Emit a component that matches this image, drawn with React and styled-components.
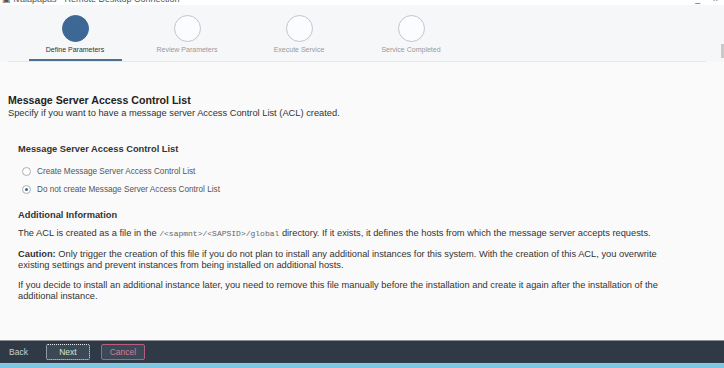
import React from 'react'
import styled, { createGlobalStyle } from 'styled-components'

const Global = createGlobalStyle`
    html, body {
        margin: 0;
        padding: 0;
        background: #fafafa;
        font-family: "Liberation Sans", Arial, sans-serif;
    }
`

const Page = styled.div`
    width: 724px;
    height: 368px;
    display: flex;
    flex-direction: column;
    overflow: hidden;
    background: #fafafa;
`

const TitleBar = styled.div`
    height: 5px;
    overflow: hidden;
    background: #ffffff;
    display: flex;
    justify-content: space-between;
    font-size: 9px;
    color: #555;
    line-height: 1;
    padding: 0 6px 0 2px;
`

const TitleText = styled.span`
    margin-top: -5px;
    white-space: nowrap;
`

const Header = styled.div`
    height: 57px;
    background: #f6f7f8;
    padding: 0 18px 0 8px;
`

const Steps = styled.div`
    height: 56px;
    display: flex;
    padding-left: 11px;
    border-bottom: 1px solid #e6e8ea;
`

const Step = styled.div`
    width: 112px;
    display: flex;
    flex-direction: column;
    align-items: center;
`

const Circle = styled.div`
    width: 27px;
    height: 27px;
    margin-top: 10px;
    border-radius: 50%;
    box-sizing: border-box;
    background: ${p => (p.active ? '#3d6794' : '#fbfcfd')};
    border: 1px solid ${p => (p.active ? '#3d6794' : '#bcc6d2')};
`

const StepLabel = styled.div`
    margin-top: 4px;
    font-size: 7px;
    color: ${p => (p.active ? '#333' : '#9a9a9a')};
    flex: 1;
`

const Underline = styled.div`
    width: 93px;
    height: 2px;
    background: ${p => (p.active ? '#4d6f92' : 'transparent')};
`

const Content = styled.div`
    flex: 1;
    display: flex;
    background: #fafafa;
`

const Main = styled.div`
    flex: 1;
    padding: 32px 8px 0 8px;
    color: #333;
`

const ScrollTrack = styled.div`
    width: 3px;
    display: flex;
    flex-direction: column;
`

const ScrollThumb = styled.div`
    height: 14px;
    background: #c9c9c9;
    margin-top: -18px;
`

const Title = styled.div`
    font-size: 10.6px;
    font-weight: bold;
    color: #222;
    line-height: 13px;
`

const Subtitle = styled.div`
    font-size: 9.3px;
    line-height: 13px;
    color: #333;
`

const Section = styled.div`
    padding-left: 10px;
    margin-top: ${p => p.top || 0}px;
`

const SectionTitle = styled.div`
    font-size: 9.3px;
    font-weight: bold;
    color: #333;
    line-height: 12px;
`

const RadioList = styled.div`
    margin-top: 7px;
`

const RadioRow = styled.label`
    display: flex;
    align-items: center;
    gap: 6px;
    margin-left: 4px;
    height: 18px;
    font-size: 8.2px;
    color: #555;
`

const RadioDot = styled.span`
    width: 9px;
    height: 9px;
    border-radius: 50%;
    box-sizing: border-box;
    border: 1px solid #a9b0b8;
    background: #fff;
    display: flex;
    align-items: center;
    justify-content: center;

    &::after {
        content: '';
        width: 3px;
        height: 3px;
        border-radius: 50%;
        background: ${p => (p.checked ? '#3d6794' : 'transparent')};
    }
`

const Para = styled.p`
    margin: ${p => p.top || 10}px 0 0 0;
    font-size: 9.3px;
    line-height: 11px;
    color: #333;
    max-width: 645px;
`

const Code = styled.code`
    font-family: "Liberation Mono", "Courier New", monospace;
    font-size: 8px;
    color: #666;
`

const Footer = styled.div`
    height: 22px;
    border-top: 1px solid #8b8f94;
    background: #2f3a46;
    display: flex;
    align-items: center;
    gap: 11px;
    padding-left: 9px;
`

const BackLink = styled.span`
    font-size: 8.5px;
    color: #c9ced3;
    margin-right: 7px;
`

const Button = styled.button`
    width: 44px;
    height: 16px;
    box-sizing: border-box;
    padding: 0;
    font-family: "Liberation Sans", Arial, sans-serif;
    font-size: 8.5px;
    background: #3b4957;
    border-radius: 2px;
    color: ${p => (p.variant === 'cancel' ? '#d77b98' : '#d8e6cf')};
    border: 1px ${p => (p.variant === 'cancel' ? 'solid #b85d7e' : 'dotted #e8ecef')};
`

const Taskbar = styled.div`
    height: 4px;
    border-top: 1px solid #b8bcc0;
    background: #7cc6e2;
`

const steps = ['Define Parameters', 'Review Parameters', 'Execute Service', 'Service Completed']

const App = () => {
    return (
        <Page>
            <Global />
            <TitleBar>
                <TitleText>▣ ivalapapas - Remote Desktop Connection</TitleText>
                <TitleText>_ &nbsp;&nbsp;&nbsp; ×</TitleText>
            </TitleBar>
            <Header>
                <Steps>
                    {steps.map((s, i) => (
                        <Step key={s}>
                            <Circle active={i === 0} />
                            <StepLabel active={i === 0}>{s}</StepLabel>
                            <Underline active={i === 0} />
                        </Step>
                    ))}
                </Steps>
            </Header>
            <Content>
                <Main>
                    <Title>Message Server Access Control List</Title>
                    <Subtitle>Specify if you want to have a message server Access Control List (ACL) created.</Subtitle>
                    <Section top={23}>
                        <SectionTitle>Message Server Access Control List</SectionTitle>
                        <RadioList>
                            <RadioRow>
                                <RadioDot />
                                Create Message Server Access Control List
                            </RadioRow>
                            <RadioRow>
                                <RadioDot checked />
                                Do not create Message Server Access Control List
                            </RadioRow>
                        </RadioList>
                    </Section>
                    <Section top={11}>
                        <SectionTitle>Additional Information</SectionTitle>
                        <Para top={7}>
                            The ACL is created as a file in the <Code>/&lt;sapmnt&gt;/&lt;SAPSID&gt;/global</Code> directory. If it exists, it defines the hosts from which the message server accepts requests.
                        </Para>
                        <Para>
                            <b>Caution:</b> Only trigger the creation of this file if you do not plan to install any additional instances for this system. With the creation of this ACL, you overwrite existing settings and prevent instances from being installed on additional hosts.
                        </Para>
                        <Para top={9}>
                            If you decide to install an additional instance later, you need to remove this file manually before the installation and create it again after the installation of the additional instance.
                        </Para>
                    </Section>
                </Main>
                <ScrollTrack>
                    <ScrollThumb />
                </ScrollTrack>
            </Content>
            <Footer>
                <BackLink>Back</BackLink>
                <Button>Next</Button>
                <Button variant="cancel">Cancel</Button>
            </Footer>
            <Taskbar />
        </Page>
    )
}

export default App
